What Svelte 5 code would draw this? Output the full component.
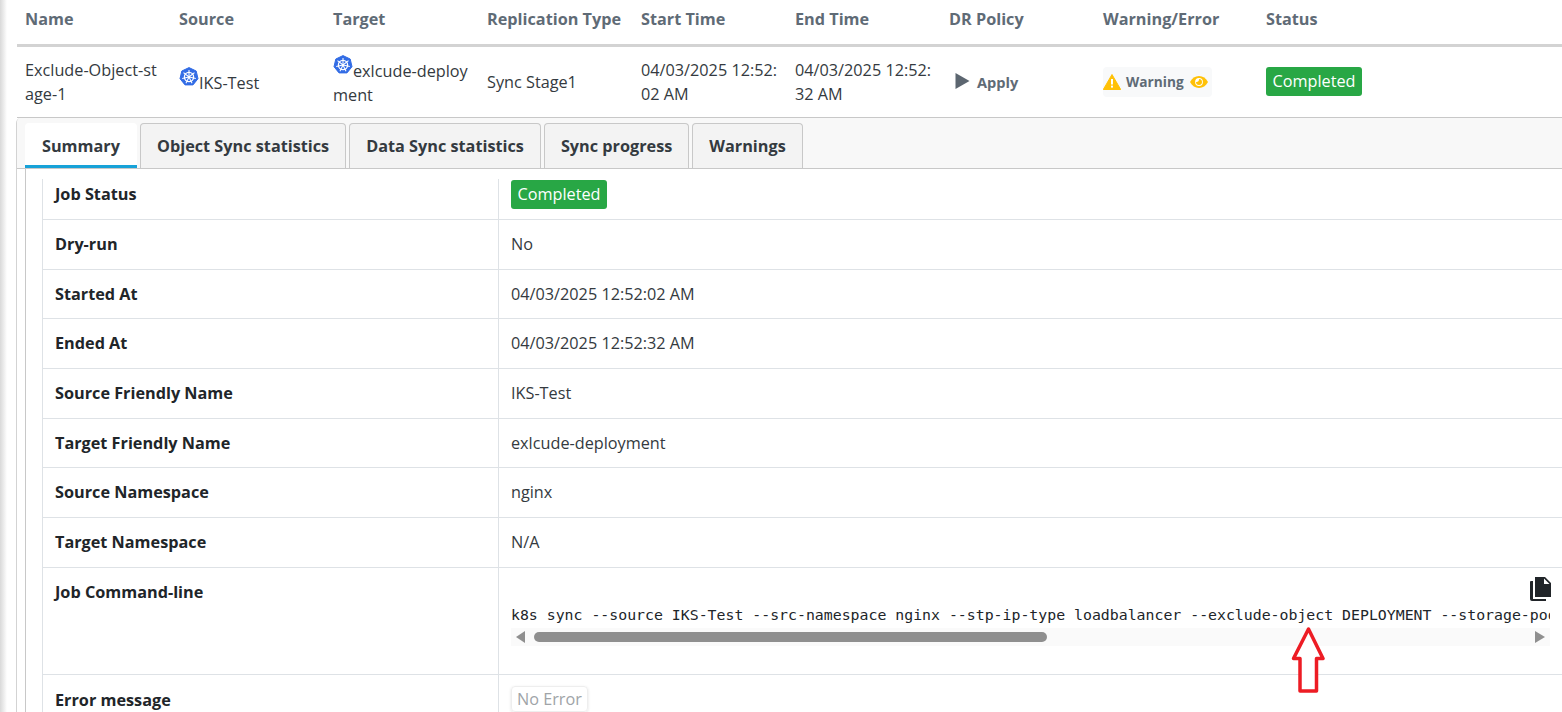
<script>
  const columns = [
    ['Name', 154], ['Source', 154], ['Target', 154], ['Replication Type', 154], ['Start Time', 154],
    ['End Time', 154], ['DR Policy', 154], ['Warning/Error', 163], ['Status', 279]
  ];
  const tabs = ['Summary', 'Object Sync statistics', 'Data Sync statistics', 'Sync progress', 'Warnings'];
  const rows = [
    ['Dry-run', 'No'],
    ['Started At', '04/03/2025 12:52:02 AM'],
    ['Ended At', '04/03/2025 12:52:32 AM'],
    ['Source Friendly Name', 'IKS-Test'],
    ['Target Friendly Name', 'exlcude-deployment'],
    ['Source Namespace', 'nginx'],
    ['Target Namespace', 'N/A']
  ];
  const command = 'k8s sync --source IKS-Test --src-namespace nginx --stp-ip-type loadbalancer --exclude-object DEPLOYMENT --storage-pool default --target exlcude-deployment';
  const spokes = [0, 51.4, 102.9, 154.3, 205.7, 257.1, 308.6];
</script>

{#snippet k8s()}
  <svg class="k8s" viewBox="0 0 20 20" aria-hidden="true">
    <path d="M10 .6 17.2 4l1.8 7.7-5 6.2H6L1 11.700 2.800 4z" fill="#326ce5" stroke="#326ce5" stroke-linejoin="round" />
    <circle cx="10" cy="10" r="4.600" fill="none" stroke="#fff" stroke-width="1.300" />
    {#each spokes as a}
      <line x1="10" y1="10" x2="10" y2="3" stroke="#fff" stroke-width="1" transform="rotate({a} 10 10)" />
    {/each}
    <circle cx="10" cy="10" r="1.100" fill="#fff" />
  </svg>
{/snippet}

<div class="page">
  <div class="columns header">
    {#each columns as [label, width]}
      <div class="th" style="width:{width}px">{label}</div>
    {/each}
  </div>

  <div class="columns job">
    <div class="cell w154">Exclude-Object-st<br />age-1</div>
    <div class="cell w154 source">{@render k8s()}IKS-Test</div>
    <div class="cell w154 target">{@render k8s()}exlcude-deploy<br />ment</div>
    <div class="cell w154">Sync Stage1</div>
    <div class="cell w154">04/03/2025 12:52:<br />02 AM</div>
    <div class="cell w154">04/03/2025 12:52:<br />32 AM</div>
    <div class="cell w154 policy">
      <svg class="play" viewBox="0 0 14 16" aria-hidden="true"><path d="M0 0v16l14-8z" fill="#5c6670" /></svg>
      <span>Apply</span>
    </div>
    <div class="cell w163">
      <div class="warning">
        <svg class="tri" viewBox="0 0 18 16" aria-hidden="true">
          <path d="M9 .5 17.700 15.500H.3z" fill="#ffc107" stroke="#ffc107" stroke-linejoin="round" />
          <rect x="8" y="5" width="2" height="5.500" fill="#fff" />
          <rect x="8" y="11.600" width="2" height="2" fill="#fff" />
        </svg>
        <span>Warning</span>
        <svg class="eye" viewBox="0 0 18 12" aria-hidden="true">
          <path d="M0 6c2-3.800 5.200-6 9-6s7 2.200 9 6c-2 3.800-5.200 6-9 6s-7-2.200-9-6z" fill="#ffc107" />
          <circle cx="9" cy="6" r="3.900" fill="#fff" />
          <path d="M9 3a3 3 0 1 1-3 3c1.500.4 3.300-1 3-3z" fill="#ffc107" />
        </svg>
      </div>
    </div>
    <div class="cell status-cell"><span class="badge">Completed</span></div>
  </div>

  <div class="detail">
    <div class="tabs">
      {#each tabs as tab, i}
        <div class="tab" class:active={i === 0}>{tab}</div>
      {/each}
    </div>
    <div class="panel">
      <div class="rows">
        <div class="row status-row">
          <div class="key">Job Status</div>
          <div class="value"><span class="badge">Completed</span></div>
        </div>
        {#each rows as [key, value]}
          <div class="row">
            <div class="key">{key}</div>
            <div class="value">{value}</div>
          </div>
        {/each}
        <div class="row cmd-row">
          <div class="key cmd-key">Job Command-line</div>
          <div class="value cmd-value">
            <svg class="copy" viewBox="0 0 22 24" aria-hidden="true">
              <path d="M6 0h10l6 6v14H6z M15 1.500V7h5.500z" fill="#212529" fill-rule="evenodd" />
              <path d="M1.500 4H4v18h13v2H3a2 2 0 0 1-2-2V5z" fill="#212529" />
            </svg>
            <div class="cmd">{command}</div>
            <div class="scrollbar">
              <span class="arrow left"></span>
              <div class="track"><div class="thumb"></div></div>
              <span class="arrow right"></span>
            </div>
          </div>
        </div>
        <div class="row last-row">
          <div class="key">Error message</div>
          <div class="value"><span class="no-error">No Error</span></div>
        </div>
      </div>
    </div>
  </div>

  <svg class="red-arrow" viewBox="0 0 34 67" aria-hidden="true">
    <path d="M17.500 3 32 32.500H25.500V65H9V32.500H2.500z" fill="#fff" stroke="#ed1c24" stroke-width="3.500" stroke-linejoin="round" />
  </svg>
</div>

<style>
  :global(html), :global(body) {
    margin: 0;
    height: 712px;
    overflow: hidden;
    background: #fff;
  }
  .page {
    position: relative;
    box-sizing: border-box;
    width: 1562px;
    height: 712px;
    overflow: hidden;
    padding-left: 17px;
    font-family: "Open Sans", sans-serif;
    font-size: 16.240px;
    line-height: 24px;
    color: #343a40;
    background: linear-gradient(90deg, #d9d9d9 0, #eee 4px, #fff 7px);
  }
  .columns { display: flex; }
  .header {
    height: 44px;
    border-bottom: 3px solid #d3d3d3;
    background: #fff;
  }
  .th {
    box-sizing: border-box;
    padding: 7px 8px 0;
    font-weight: 700;
    color: #5f6b76;
    white-space: nowrap;
  }
  .job {
    height: 70px;
    border-bottom: 1px solid #c8c8c8;
    background: #fff;
  }
  .cell {
    box-sizing: border-box;
    padding: 0 8px;
    align-self: center;
    white-space: nowrap;
  }
  .w154 { width: 154px; }
  .w163 { width: 163px; }
  .k8s { width: 20px; height: 20px; vertical-align: 2px; }
  .source { margin-top: -3px; }
  .target { margin-top: -2px; }
  .status-cell { margin-top: -1px; }
  .policy {
    display: flex;
    align-items: center;
    gap: 7px;
    padding-left: 14px;
    font-size: 14.600px;
    font-weight: 700;
    color: #5f6b76;
  }
  .play { width: 15px; height: 16px; margin-top: -2px; }
  .warning {
    display: inline-flex;
    align-items: center;
    width: 109px;
    height: 30px;
    border-radius: 4px;
    background: #f8f9fa;
    font-size: 13.700px;
    font-weight: 700;
    color: #5f6b76;
  }
  .tri { width: 18px; height: 16px; margin-right: 5px; }
  .eye { width: 18px; height: 12px; margin-left: 6px; }
  .badge {
    display: inline-block;
    padding: 2px 6.500px;
    border-radius: 3px;
    background: #28a745;
    color: #fff;
    line-height: 25px;
  }
  .detail {
    margin-left: -1px;
    border-left: 1px solid #d3d3d3;
    border-top-left-radius: 5px;
    background: #fff;
    overflow: hidden;
  }
  .tabs {
    display: flex;
    gap: 3px;
    height: 51px;
    box-sizing: border-box;
    padding: 5px 0 0 8px;
    background: #f8f8f8;
    border-bottom: 1px solid #c8c8c8;
  }
  .tab {
    box-sizing: border-box;
    height: 45px;
    padding: 10px 16px 0;
    border: 1px solid #c8c8c8;
    border-bottom: 0;
    border-radius: 4px 4px 0 0;
    background: #f3f3f3;
    font-weight: 700;
    white-space: nowrap;
  }
  .tab.active {
    width: 112px;
    padding: 11px 17px 0;
    border: 0;
    border-bottom: 3px solid #17a2d8;
    background: #fff;
  }
  .panel {
    margin-left: 8px;
    padding-top: 10px;
    padding-left: 16px;
    border-left: 1px solid #c8c8c8;
    background: #fff;
  }
  .rows { border-left: 1px solid #dee2e6; }
  .row {
    display: flex;
    box-sizing: border-box;
    height: 49.700px;
    border-bottom: 1px solid #dee2e6;
  }
  .status-row { height: 41px; }
  .key {
    box-sizing: border-box;
    width: 456px;
    padding: 12px 12px 0;
    border-right: 1px solid #dee2e6;
    font-weight: 700;
    color: #212529;
  }
  .value {
    box-sizing: border-box;
    flex: 1;
    min-width: 0;
    padding: 12px 12px 0;
    color: #343a40;
  }
  .status-row .key { padding-top: 3px; }
  .status-row .value { padding-top: 1px; }
  .cmd-row { height: 107px; }
  .cmd-value {
    position: relative;
    padding: 36px 12px 0;
  }
  .cmd {
    width: 1039px;
    height: 24px;
    overflow: hidden;
    white-space: pre;
    font-family: "DejaVu Sans Mono", monospace;
    font-size: 14.850px;
    line-height: 22px;
    color: #212529;
  }
  .copy {
    position: absolute;
    top: 9px;
    right: 11px;
    width: 22px;
    height: 24px;
  }
  .scrollbar {
    display: flex;
    align-items: center;
    width: 1039px;
    height: 18px;
    background: #fafafa;
  }
  .arrow {
    width: 0;
    height: 0;
    border-top: 6px solid transparent;
    border-bottom: 6px solid transparent;
  }
  .arrow.left { margin-left: 5px; border-right: 9px solid #8f8f8f; }
  .arrow.right { margin-right: 5px; border-left: 10px solid #8f8f8f; }
  .track { flex: 1; padding: 0 10px 0 9px; }
  .thumb {
    width: 513px;
    height: 10px;
    border-radius: 5px;
    background: #8f8f8f;
  }
  .last-row .key { padding-top: 13px; }
  .last-row .value { padding-top: 11px; }
  .no-error {
    display: inline-block;
    padding: 0 5px;
    border: 1px solid #eee;
    border-radius: 4px;
    color: #a0a4a8;
    box-shadow: 0 1px 3px #0000001f;
  }
  .red-arrow {
    position: absolute;
    left: 1291px;
    top: 626px;
    width: 34px;
    height: 67px;
  }
</style>
